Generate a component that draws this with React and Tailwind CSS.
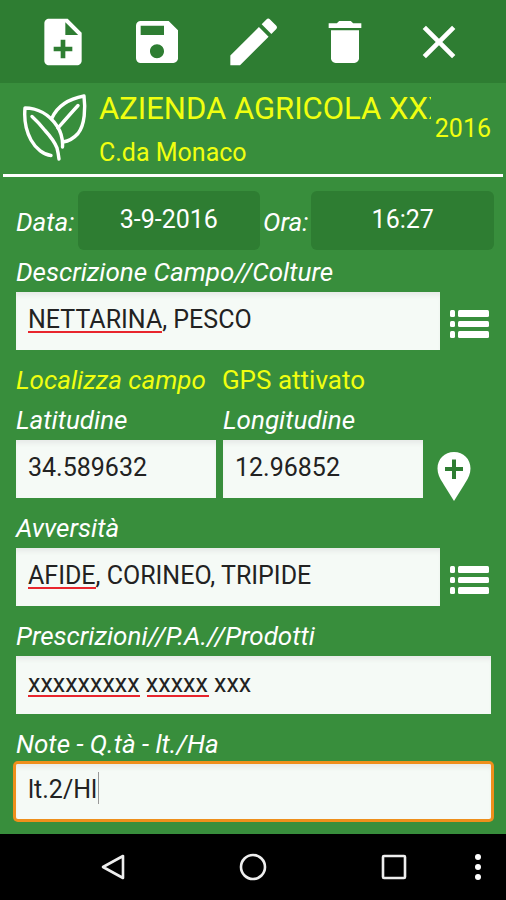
import React, { useState } from 'react';
import { MdNoteAdd, MdSave, MdEdit, MdDelete, MdClose } from 'react-icons/md';

const LeafLogo = () => (
  <svg viewBox="0 0 66 70" className="w-[66px] h-[70px] flex-shrink-0" fill="none" stroke="white" strokeWidth="3.4" strokeLinecap="round" strokeLinejoin="round" aria-hidden="true">
    <path d="M29 61.500 C22 61 14 55 9 46 C4 37 2 25 3 14 C15 14 27 20 35 32 C39 38 41 45 40.500 53" />
    <path d="M10 22.500 C15 27 19 31.500 23 36.500 C29 43 33 49 35 54 C36 58 36.500 61 37 65" />
    <path d="M30 24 C35 13 46 5 62 2 C63.500 14 63 31 56 39.500 C52 44 47 47 41 48" />
    <path d="M56 11.500 C50 18 43 26 36 34" />
  </svg>
);

const ListIcon = () => (
  <svg viewBox="0 0 41 28" className="w-[41px] h-7" fill="white" aria-hidden="true">
    <rect x="0" y="0" width="5" height="7" rx="1.5" />
    <rect x="8" y="0" width="31" height="7" rx="1.5" />
    <rect x="0" y="11" width="5" height="6" rx="1.5" />
    <rect x="8" y="11" width="31" height="6" rx="1.5" />
    <rect x="0" y="21" width="5" height="7" rx="1.5" />
    <rect x="8" y="21" width="31" height="7" rx="1.5" />
  </svg>
);

const PinIcon = () => (
  <svg viewBox="0 0 34 50" className="w-[34px] h-[50px]" aria-hidden="true">
    <path fill="white" d="M17 0 C7.500 0 .5 7 .5 16.500 C.5 23 4 28 7 33 L17 49 L27 33 C30 28 33.500 23 33.500 16.500 C33.500 7 26.500 0 17 0 Z" />
    <path stroke="#2e7d32" strokeWidth="4" d="M8 17 H26 M17 7.500 V27" />
  </svg>
);

const tools = [
  { label: 'Nuovo', icon: <MdNoteAdd className="w-14 h-14" /> },
  { label: 'Salva', icon: <MdSave className="w-14 h-14" /> },
  { label: 'Modifica', icon: <MdEdit viewBox="-1 0 24 24" className="w-[62px] h-[62px]" /> },
  { label: 'Elimina', icon: <MdDelete className="w-14 h-14" /> },
  { label: 'Chiudi', icon: <MdClose className="w-14 h-14" /> },
];

const Label = ({ htmlFor, children, className = '' }) => (
  <label htmlFor={htmlFor} className={`block italic whitespace-nowrap text-[26px] leading-10 ${className}`}>{children}</label>
);

// children hold the marks drawn over the text (spelling underlines, caret)
const Field = ({ id, value, onChange, focused, children }) => (
  <div className="relative flex-1 min-w-0">
    <input id={id} type="text" spellCheck={false} value={value} onChange={(e) => onChange(id, e.target.value)}
      className={`block w-full px-3 pb-1 bg-[#f5faf6] text-[#222] shadow-[inset_0_5px_5px_-2px_#e6e9e7] outline-none ${focused ? 'h-[55px] ring-3 ring-[#ee8f1c] rounded-xs' : 'h-[58px]'}`} />
    {children}
  </div>
);

const Underlines = ({ children }) => (
  <div className="absolute left-3 top-[39px] flex gap-[7px] pointer-events-none" aria-hidden="true">{children}</div>
);

const App = () => {
  const [form, setForm] = useState({
    campo: 'NETTARINA, PESCO',
    lat: '34.589632',
    lon: '12.96852',
    avversita: 'AFIDE, CORINEO, TRIPIDE',
    prodotti: 'xxxxxxxxx xxxxx xxx',
    note: 'lt.2/Hl',
  });

  const update = (id, value) => setForm({ ...form, [id]: value });

  return (
    <div className="min-h-screen flex flex-col bg-[#388e3c] text-white text-[25px] font-[Roboto,sans-serif]">
      <div className="h-[83px] pl-4 pr-5 bg-[#2e7d32] grid grid-cols-5 items-center">
        {tools.map((t) => (
          <button key={t.label} type="button" aria-label={t.label} className="flex justify-center">
            {t.icon}
          </button>
        ))}
      </div>

      <header className="mx-[3px] pl-[19px] pr-3 h-[94px] flex items-center border-b-3 border-white text-[#f0ff10]">
        <LeafLogo />
        <div className="ml-[11px] mr-1 pt-1 flex-1 min-w-0">
          <h1 className="text-[31px] leading-11 whitespace-nowrap overflow-hidden">AZIENDA AGRICOLA XXX</h1>
          <p className="leading-11">C.da Monaco</p>
        </div>
        <span>2016</span>
      </header>

      <main className="flex-1 pl-4 pr-[15px] pb-3">
        <div className="mt-3.5 -mr-[3px] flex items-center gap-[3px]">
          <Label htmlFor="data" className="pt-0.5">Data:</Label>
          <button id="data" type="button" className="flex-1 h-[59px] pb-0.5 rounded-md bg-[#2e7d32]">3-9-2016</button>
          <Label htmlFor="ora" className="pt-0.5">Ora:</Label>
          <button id="ora" type="button" className="flex-1 h-[59px] pb-0.5 rounded-md bg-[#2e7d32]">16:27</button>
        </div>

        <Label htmlFor="campo" className="mt-0.5">Descrizione Campo//Colture</Label>
        <div className="flex items-center gap-2.5">
          <Field id="campo" value={form.campo} onChange={update}>
            <Underlines><span className="w-[134px] h-0.5 bg-[#e8252d]" /></Underlines>
          </Field>
          <button type="button" aria-label="Elenco colture" className="pt-1.5"><ListIcon /></button>
        </div>

        <div className="mt-2.5 flex gap-4 text-[26px] leading-10 text-[#f0ff10]">
          <span className="italic">Localizza campo</span>
          <span>GPS attivato</span>
        </div>
        <div className="flex gap-[7px]">
          <div className="flex-1 min-w-0">
            <Label htmlFor="lat">Latitudine</Label>
            <Field id="lat" value={form.lat} onChange={update} />
          </div>
          <div className="flex-1 min-w-0">
            <Label htmlFor="lon">Longitudine</Label>
            <Field id="lon" value={form.lon} onChange={update} />
          </div>
          <button type="button" aria-label="Aggiungi posizione" className="self-end ml-[7px] mr-5 -mb-1"><PinIcon /></button>
        </div>

        <Label htmlFor="avversita" className="mt-2.5">Avversità</Label>
        <div className="flex items-center gap-2.5">
          <Field id="avversita" value={form.avversita} onChange={update}>
            <Underlines><span className="w-[68px] h-0.5 bg-[#e8252d]" /></Underlines>
          </Field>
          <button type="button" aria-label="Elenco avversità" className="pt-1.5"><ListIcon /></button>
        </div>

        <Label htmlFor="prodotti" className="mt-2.5">Prescrizioni//P.A.//Prodotti</Label>
        <Field id="prodotti" value={form.prodotti} onChange={update}>
          <Underlines>
            <span className="w-[112px] h-0.5 bg-[#e8252d]" />
            <span className="w-[62px] h-0.5 bg-[#e8252d]" />
          </Underlines>
        </Field>

        <Label htmlFor="note" className="mt-2.5">Note - Q.tà - lt./Ha</Label>
        <Field id="note" value={form.note} onChange={update} focused>
          <span className="absolute left-[82px] top-2 w-px h-8 bg-[#999] pointer-events-none" aria-hidden="true" />
        </Field>
      </main>

      <nav className="h-[66px] bg-black relative flex items-center justify-center gap-[114px]">
        <button type="button" aria-label="Indietro">
          <svg viewBox="0 0 26 28" className="w-[26px] h-7" fill="none" stroke="#eee" strokeWidth="2.6" strokeLinejoin="round"><path d="M24 3 V25 L4 14 Z" /></svg>
        </button>
        <button type="button" aria-label="Home">
          <svg viewBox="0 0 28 28" className="w-7 h-7" fill="none" stroke="#eee" strokeWidth="2.6"><circle cx="14" cy="14" r="12" /></svg>
        </button>
        <button type="button" aria-label="Recenti">
          <svg viewBox="0 0 26 28" className="w-[26px] h-7" fill="none" stroke="#eee" strokeWidth="2.6" strokeLinejoin="round"><rect x="2" y="3" width="22" height="22" rx="1" /></svg>
        </button>
        <button type="button" aria-label="Menu" className="absolute right-6">
          <svg viewBox="0 0 8 28" className="w-2 h-7" fill="white"><circle cx="4" cy="4" r="3" /><circle cx="4" cy="14" r="3" /><circle cx="4" cy="24" r="3" /></svg>
        </button>
      </nav>
    </div>
  );
};

export default App;
